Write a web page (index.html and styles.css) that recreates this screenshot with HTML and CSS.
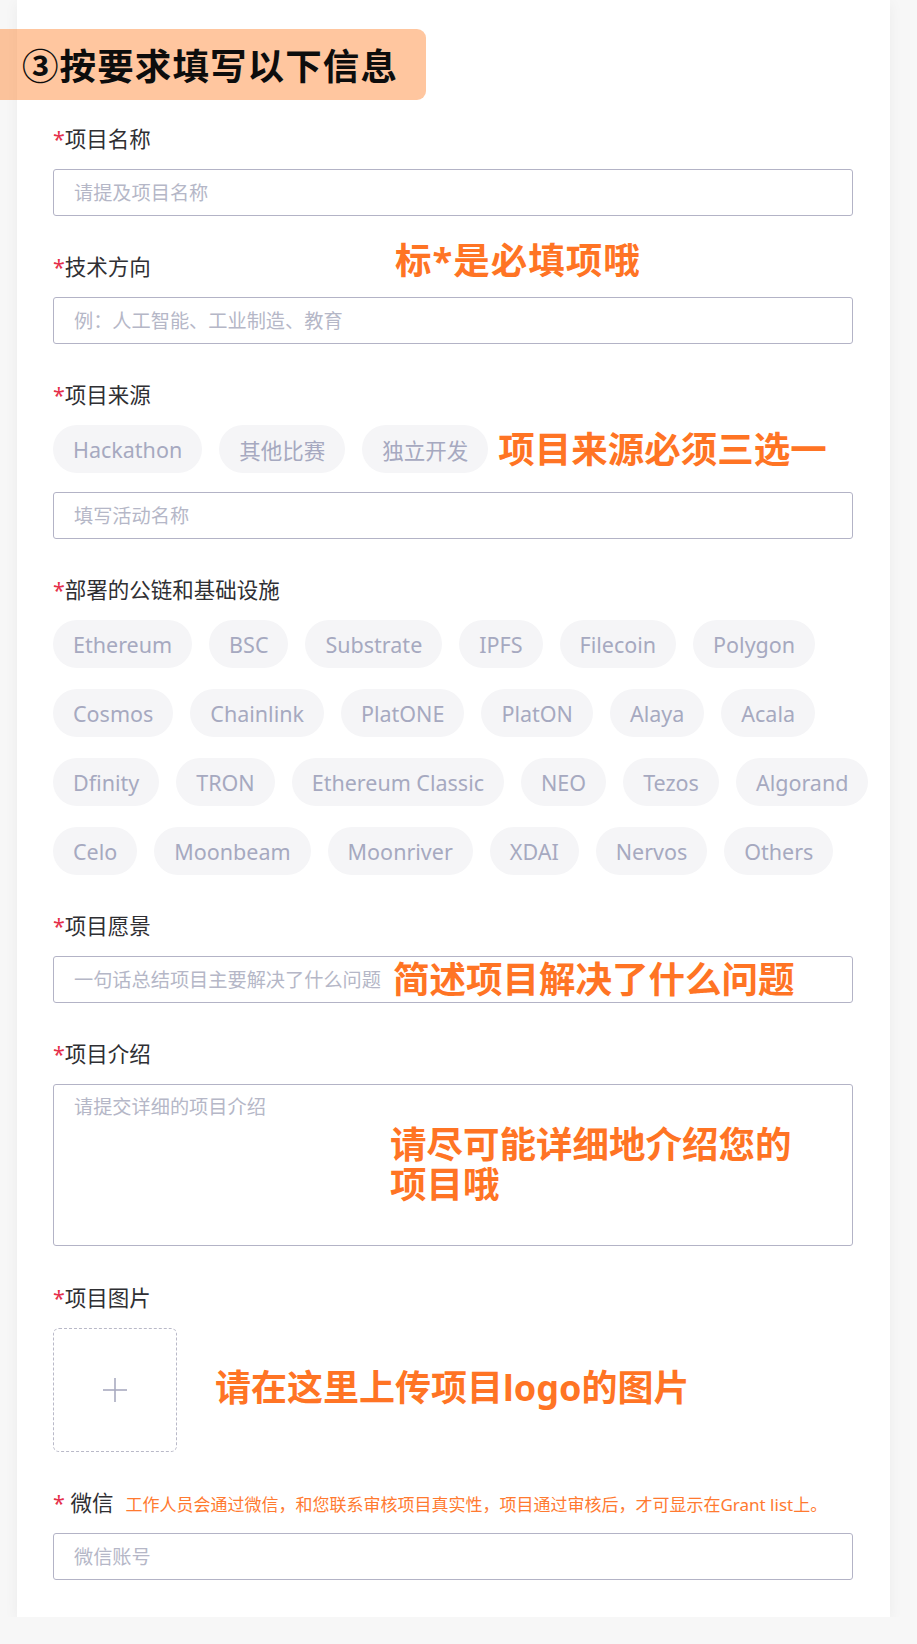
FILE: index.html
```html
<!DOCTYPE html>
<html lang="zh-CN">
<head>
<meta charset="utf-8">
<title>填写项目信息</title>
<link rel="stylesheet" href="styles.css">
</head>
<body>
<div class="card">
  <div class="banner">③按要求填写以下信息</div>

  <div class="field first">
    <div class="label"><span class="req">*</span>项目名称</div>
    <input class="input" placeholder="请提及项目名称">
  </div>

  <div class="field rel">
    <div class="note note-required">标*是必填项哦</div>
    <div class="label"><span class="req">*</span>技术方向</div>
    <input class="input" placeholder="例：人工智能、工业制造、教育">
  </div>

  <div class="field">
    <div class="label"><span class="req">*</span>项目来源</div>
    <div class="source-row">
      <span class="pill">Hackathon</span>
      <span class="pill">其他比赛</span>
      <span class="pill">独立开发</span>
      <span class="note-inline">项目来源必须三选一</span>
    </div>
    <input class="input source-input" placeholder="填写活动名称">
  </div>

  <div class="field">
    <div class="label"><span class="req">*</span>部署的公链和基础设施</div>
    <div class="chains">
      <span class="pill">Ethereum</span>
      <span class="pill">BSC</span>
      <span class="pill">Substrate</span>
      <span class="pill">IPFS</span>
      <span class="pill">Filecoin</span>
      <span class="pill">Polygon</span>
      <span class="pill">Cosmos</span>
      <span class="pill">Chainlink</span>
      <span class="pill">PlatONE</span>
      <span class="pill">PlatON</span>
      <span class="pill">Alaya</span>
      <span class="pill">Acala</span>
      <span class="pill">Dfinity</span>
      <span class="pill">TRON</span>
      <span class="pill">Ethereum Classic</span>
      <span class="pill">NEO</span>
      <span class="pill">Tezos</span>
      <span class="pill">Algorand</span>
      <span class="pill">Celo</span>
      <span class="pill">Moonbeam</span>
      <span class="pill">Moonriver</span>
      <span class="pill">XDAI</span>
      <span class="pill">Nervos</span>
      <span class="pill">Others</span>
    </div>
  </div>

  <div class="field">
    <div class="label"><span class="req">*</span>项目愿景</div>
    <div class="rel">
      <input class="input" placeholder="一句话总结项目主要解决了什么问题">
      <div class="note note-vision">简述项目解决了什么问题</div>
    </div>
  </div>

  <div class="field">
    <div class="label"><span class="req">*</span>项目介绍</div>
    <div class="rel">
      <textarea class="textarea" placeholder="请提交详细的项目介绍"></textarea>
      <div class="note note-intro">请尽可能详细地介绍您的<br>项目哦</div>
    </div>
  </div>

  <div class="field pic">
    <div class="label"><span class="req">*</span>项目图片</div>
    <div class="upload-row">
      <div class="upload">
        <svg width="26" height="26" viewBox="0 0 26 26" aria-hidden="true">
          <line x1="13" y1="1" x2="13" y2="25" stroke="#a9abc0" stroke-width="1.6"/>
          <line x1="1" y1="13" x2="25" y2="13" stroke="#a9abc0" stroke-width="1.6"/>
        </svg>
      </div>
      <div class="note-upload">请在这里上传项目logo的图片</div>
    </div>
  </div>

  <div class="field">
    <div class="label"><span class="req">*</span>&nbsp;微信<span class="hint">工作人员会通过微信，和您联系审核项目真实性，项目通过审核后，才可显示在Grant list上。</span></div>
    <input class="input" placeholder="微信账号">
  </div>
</div>
</body>
</html>
```

FILE: styles.css
```css
* { box-sizing: border-box; }

body {
  margin: 0;
  background: #f7f7f7;
  font-family: "Noto Sans", "Noto Sans CJK SC", sans-serif;
  color: #2f2f33;
}

.card {
  margin-left: 17px;
  width: 873px;
  background: #ffffff;
  box-shadow: 0 3px 14px rgba(0, 0, 0, 0.05);
  padding: 29px 37px 37px 36px;
}

.banner {
  margin-left: -53px;
  width: 426px;
  height: 71px;
  padding-left: 22px;
  display: flex;
  align-items: center;
  background: rgba(255, 145, 70, 0.52);
  border-radius: 0 9px 9px 0;
  font-family: "Noto Sans CJK SC", sans-serif;
  font-size: 36.5px;
  font-weight: 700;
  color: #0d0d0d;
  letter-spacing: 1.1px;
}

.field { margin-top: 36px; }
.field.first { margin-top: 24px; }
.field.pic { margin-top: 37px; }

.rel { position: relative; }

.label {
  font-size: 21.5px;
  line-height: 30px;
  height: 30px;
  margin-bottom: 15px;
  color: #2f2f33;
  white-space: nowrap;
}

.req { color: #e5304b; }

.input {
  display: block;
  width: 800px;
  height: 47px;
  border: 1px solid #b3b3c6;
  border-radius: 3px;
  padding: 0 20px;
  font-family: "Noto Sans", "Noto Sans CJK SC", sans-serif;
  font-size: 19.2px;
  color: #2f2f33;
  background: #fff;
  outline: none;
}

.textarea {
  display: block;
  width: 800px;
  height: 162px;
  border: 1px solid #b3b3c6;
  border-radius: 3px;
  padding: 8px 20px;
  font-family: "Noto Sans", "Noto Sans CJK SC", sans-serif;
  font-size: 19.2px;
  line-height: 28px;
  resize: none;
  outline: none;
  background: #fff;
}

.input::placeholder,
.textarea::placeholder { color: #b5b7c7; }

.pill {
  display: inline-flex;
  align-items: center;
  height: 48px;
  padding: 0 20px;
  border-radius: 24px;
  background: #f5f5f7;
  color: #a6a9c0;
  font-size: 21.5px;
  white-space: nowrap;
}

.source-row {
  display: flex;
  align-items: center;
  gap: 17px;
}

.source-input { margin-top: 19px; }

.chains {
  display: flex;
  flex-wrap: wrap;
  column-gap: 17px;
  row-gap: 21px;
  margin-right: -47px;
}

.note,
.note-inline,
.note-upload {
  font-family: "Noto Sans", "Noto Sans CJK SC", sans-serif;
  font-weight: 700;
  font-size: 36.5px;
  line-height: 40px;
  color: #ff7424;
  white-space: nowrap;
}

.note { position: absolute; }

.note-required { left: 342px; top: -12px; letter-spacing: 1px; }

.note-inline { margin-left: -7px; }

.note-vision { left: 340px; top: 3px; }

.note-intro { left: 337px; top: 40px; }

.upload-row {
  display: flex;
  align-items: center;
}

.upload {
  width: 124px;
  height: 124px;
  border: 1px dashed #b9b9c8;
  border-radius: 6px;
  display: flex;
  align-items: center;
  justify-content: center;
}

.note-upload { margin-left: 38px; margin-top: -4px; font-size: 36px; }

.hint {
  margin-left: 12px;
  font-size: 17px;
  color: #ff7a30;
}
```
